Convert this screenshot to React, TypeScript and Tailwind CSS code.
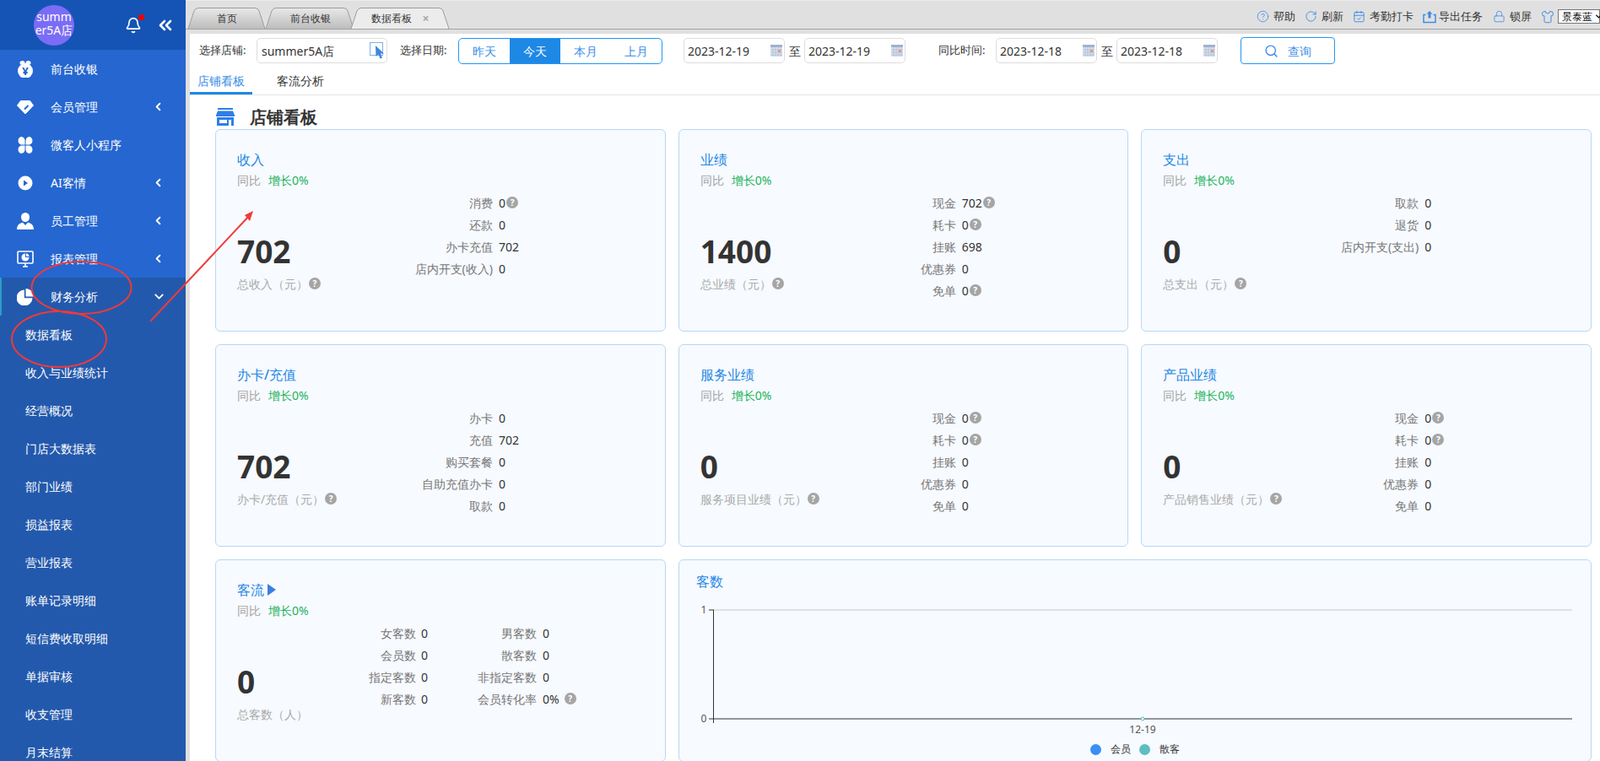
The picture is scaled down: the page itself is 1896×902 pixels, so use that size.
import { ChevronDown, ChevronLeft, ChevronsLeft, Bell, CircleHelp, RotateCw, CalendarCheck, Lock, Shirt, Search } from "lucide-react";
import type { ReactNode } from "react";

type Detail = { label: string; value: string; tip?: boolean };

const MoneyIcon = () => (
  <svg width="20" height="20" viewBox="0 0 20 20">
    <circle cx="10" cy="12" r="9" fill="#fff" />
    <ellipse cx="6.5" cy="2.5" rx="3" ry="2.5" fill="#fff" />
    <ellipse cx="13.5" cy="2.5" rx="3" ry="2.5" fill="#fff" />
    <text x="10" y="17" textAnchor="middle" fontSize="13" fontWeight="700" fill="#2566d0">¥</text>
  </svg>
);

const DiamondIcon = () => (
  <svg width="20" height="20" viewBox="0 0 20 20">
    <path d="M4.500 2.500H15.500L19.500 8L10 18L.5 8Z" fill="#fff" stroke="#fff" strokeLinejoin="round" />
    <path d="M9 12.500L13.500 8" stroke="#2566d0" strokeWidth="2" />
  </svg>
);

const CloverIcon = () => (
  <svg width="20" height="20" viewBox="0 0 20 20" fill="#fff">
    <path d="M5 0A5 5 0 0 1 9.500 5V9.500H5A5 5 0 0 1 5 0Z" />
    <path d="M15 0A5 5 0 0 0 10.500 5V9.500H15A5 5 0 0 0 15 0Z" />
    <path d="M5 20A5 5 0 0 0 9.500 15V10.500H5A5 5 0 0 0 5 20Z" />
    <path d="M15 20A5 5 0 0 1 10.500 15V10.500H15A5 5 0 0 1 15 20Z" />
  </svg>
);

const PlayIcon = () => (
  <svg width="20" height="20" viewBox="0 0 20 20">
    <circle cx="10" cy="10" r="8.500" fill="#fff" />
    <path d="M8 6.500L13 10L8 13.500Z" fill="#2566d0" />
  </svg>
);

const UserIcon = () => (
  <svg width="20" height="20" viewBox="0 0 20 20" fill="#fff">
    <ellipse cx="10" cy="5.500" rx="5" ry="5.500" />
    <path d="M0 20C0 15 3 12.500 7 11.800L10 15L13 11.800C17 12.500 20 15 20 20Z" />
  </svg>
);

const MonitorIcon = () => (
  <svg width="20" height="20" viewBox="0 0 20 20">
    <rect x="1" y="1" width="18" height="14" fill="none" stroke="#fff" strokeWidth="1.600" rx="1" />
    <path d="M7 19H13M10 15V19" stroke="#fff" strokeWidth="1.600" />
    <circle cx="10" cy="8" r="4.500" fill="#fff" />
    <path d="M10 8V3.500H14.500V8Z" fill="#2566d0" />
    <path d="M11 7V3.500A4 4 0 0 1 14.500 7Z" fill="#fff" />
  </svg>
);

const PieIcon = () => (
  <svg width="20" height="20" viewBox="0 0 20 20" fill="#fff">
    <path d="M8.800 1.500V11.200H18.500A9.500 9.500 0 1 1 8.800 1.500Z" />
    <path d="M10.500 0A9.500 9.500 0 0 1 20 9.500H10.500Z" />
  </svg>
);

const UploadIcon = () => (
  <svg width="16" height="16" viewBox="0 0 16 16" fill="none" stroke="#3f8ae6" strokeWidth="1.500">
    <path d="M3.500 5.500H1V14.500H15V5.500H12.500" />
    <path d="M8 1L11.500 4.500H9.500V9.500H6.500V4.500H4.500Z" fill="#3f8ae6" stroke="none" />
  </svg>
);

const StoreIcon = () => (
  <svg width="22" height="21" viewBox="0 0 22 21" fill="#2f7fe6">
    <rect x="2" y="0" width="18" height="2" />
    <path d="M2 3.500H20L22 8.500V10H0V8.500Z" />
    <path d="M1 11H21V21H18V14H4V18H13V14H15V21H1Z" />
  </svg>
);

const PickerIcon = () => (
  <svg width="18" height="20" viewBox="0 0 18 20">
    <rect x=".5" y=".5" width="15" height="15" fill="#fff" stroke="#7fb0e8" />
    <path d="M7 4L17 13.500H13L15 18.500L12.500 19.500L10.500 14.500L7.500 17Z" fill="#3f86dc" />
  </svg>
);

const CalendarIcon = () => (
  <svg width="14" height="14" viewBox="0 0 14 14">
    <rect width="14" height="14" fill="#dde4ef" />
    <rect width="14" height="3" fill="#9fb2cf" />
    <path d="M0 6H14M0 9H14M0 12H14M3 3V14M6 3V14M9 3V14M12 3V14" stroke="#a9bbd6" strokeWidth=".8" />
    <rect x="9" y="6" width="3" height="3" fill="#e8967c" />
  </svg>
);

const Tip = ({ className = "" }: { className?: string }) => (
  <span className={`inline-flex h-[14px] w-[14px] shrink-0 items-center justify-center rounded-full bg-[#a5a5a5] text-[10px] font-bold leading-none text-white ${className}`}>?</span>
);

const menu = [
  { name: "前台收银", icon: <MoneyIcon /> },
  { name: "会员管理", icon: <DiamondIcon />, arrow: true },
  { name: "微客人小程序", icon: <CloverIcon /> },
  { name: "AI客情", icon: <PlayIcon />, arrow: true },
  { name: "员工管理", icon: <UserIcon />, arrow: true },
  { name: "报表管理", icon: <MonitorIcon />, arrow: true },
];

const subMenu = ["数据看板", "收入与业绩统计", "经营概况", "门店大数据表", "部门业绩", "损益报表", "营业报表", "账单记录明细", "短信费收取明细", "单据审核", "收支管理", "月末结算"];

const Sidebar = () => (
  <aside className="flex h-full w-[220px] shrink-0 flex-col overflow-hidden bg-[#2359ac] text-sm text-white">
    <div className="flex h-[59px] shrink-0 items-center bg-[#1554b4]">
      <div className="ml-[40px] h-[48px] w-[48px] overflow-hidden rounded-full bg-[#7b6cf6] text-center text-[14px] leading-[16px] [word-break:break-all]">
        <div className="pt-[6px]">summer5A店</div>
      </div>
      <div className="relative ml-[60px]">
        <Bell size={20} strokeWidth={2} />
        <span className="absolute right-[-3px] top-[-3px] h-[7px] w-[7px] rounded-full bg-[#f00000]" />
      </div>
      <ChevronsLeft size={24} strokeWidth={2.6} className="ml-[16px]" />
    </div>
    <div className="bg-[#2566d0]">
      {menu.map((m) => (
        <div key={m.name} className="flex h-[45px] items-center pl-[20px]">
          {m.icon}
          <span className="ml-[20px]">{m.name}</span>
          {m.arrow && <ChevronLeft size={15} strokeWidth={3} className="absolute left-[180px]" />}
        </div>
      ))}
    </div>
    <div className="relative flex h-[45px] shrink-0 items-center border-l-2 border-[#2a9dc4] pl-[18px]">
      <PieIcon />
      <span className="ml-[20px]">财务分析</span>
      <ChevronDown size={17} strokeWidth={2.6} className="absolute left-[178px]" />
    </div>
    {subMenu.map((s) => (
      <div key={s} className="flex h-[45px] shrink-0 items-center pl-[30px]">{s}</div>
    ))}
  </aside>
);

const Tab = ({ label, width, active, className = "" }: { label: string; width: number; active?: boolean; className?: string }) => (
  <div style={{ width }} className={`relative flex h-[25px] items-center text-[12px] text-[#333] ${active ? "z-10" : ""} ${className}`}>
    <svg width={width} height="25" viewBox={`0 0 ${width} 25`} className="absolute left-0 top-0">
      <defs>
        <linearGradient id={`tab-${width}`} x1="0" y1="0" x2="0" y2="1">
          <stop offset="0" stopColor={active ? "#ececec" : "#e8e8e8"} />
          <stop offset="1" stopColor={active ? "#ececec" : "#bdbdbd"} />
        </linearGradient>
      </defs>
      <path d={`M1 25 L8 4 Q9.500 .5 13 .5 H${width - 14} Q${width - 10} .5 ${width - 9} 4 L${width - 2} 25`} fill={`url(#tab-${width})`} stroke="#9c9c9c" />
    </svg>
    <span className="relative ml-auto mr-auto flex items-center">
      {label}
      {active && <span className="ml-[12px] text-[14px] font-bold text-[#aaa]">×</span>}
    </span>
  </div>
);

const ToolLink = ({ icon, label, className }: { icon: ReactNode; label: string; className: string }) => (
  <div className={`flex items-center text-[13px] text-[#333] ${className}`}>
    {icon}
    <span className="ml-[5px]">{label}</span>
  </div>
);

const TopBar = () => (
  <div className="h-[40px] shrink-0 border-t border-[#ececf0] bg-[#e0e0e0]">
    <div className="flex h-[34px] items-end border-b border-[#a2a2a2] pl-[2px]">
      <Tab label="首页" width={94} />
      <Tab label="前台收银" width={107} className="-ml-[2px]" />
      <Tab label="数据看板" width={119} active className="-ml-[6px]" />
      <div className="ml-auto flex h-[33px] items-center overflow-hidden pt-[4px]">
        <ToolLink icon={<CircleHelp size={15} strokeWidth={1.300} color="#3f8ae6" />} label="帮助" className="mr-[11px]" />
        <ToolLink icon={<RotateCw size={15} strokeWidth={1.500} color="#3f8ae6" />} label="刷新" className="mr-[11px]" />
        <ToolLink icon={<CalendarCheck size={15} strokeWidth={1.500} color="#3f8ae6" />} label="考勤打卡" className="mr-[11px]" />
        <div className="mr-[12px] flex items-center text-[13px] text-[#333]"><UploadIcon /><span className="ml-[3px]">导出任务</span></div>
        <ToolLink icon={<Lock size={15} strokeWidth={1.300} color="#3f8ae6" />} label="锁屏" className="mr-[11px]" />
        <Shirt size={16} strokeWidth={1.500} color="#3f8ae6" />
        <div className="ml-[4px] flex h-[17px] w-[50px] shrink-0 items-center whitespace-nowrap border border-[#777] bg-white pl-[4px] text-[12px] text-black">
          景泰蓝<ChevronDown size={11} strokeWidth={3} className="ml-[2px] shrink-0" />
        </div>
      </div>
    </div>
  </div>
);

const DateInput = ({ value, className = "" }: { value: string; className?: string }) => (
  <div className={`flex h-[30px] w-[120px] shrink-0 items-center justify-between rounded-[5px] border border-[#ddd] pl-[4px] pr-[2px] text-[14px] text-[#333] ${className}`}>
    {value}
    <CalendarIcon />
  </div>
);

const Label = ({ text, className }: { text: string; className: string }) => (
  <span className={`w-[60px] shrink-0 whitespace-nowrap text-[13px] text-[#333] ${className}`}>{text}</span>
);

const Toolbar = () => (
  <div className="flex h-[40px] shrink-0 items-center text-[14px]">
    <Label text="选择店铺:" className="ml-[11px]" />
    <div className="ml-[8px] flex h-[30px] w-[155px] items-center justify-between rounded-[5px] border border-[#ddd] pl-[5px] pr-[2px] text-[#333]">
      summer5A店
      <PickerIcon />
    </div>
    <Label text="选择日期:" className="ml-[15px]" />
    <div className="ml-[9px] flex h-[31px] w-[242px] overflow-hidden rounded-[5px] border border-[#2196f3] text-[#3a8ee6]">
      <span className="flex w-[60px] items-center justify-center">昨天</span>
      <span className="flex w-[60px] items-center justify-center bg-[#1e88e5] text-white">今天</span>
      <span className="flex w-[60px] items-center justify-center">本月</span>
      <span className="flex w-[60px] items-center justify-center">上月</span>
    </div>
    <DateInput value="2023-12-19" className="ml-[25px]" />
    <span className="ml-[5px] text-[#333]">至</span>
    <DateInput value="2023-12-19" className="ml-[4px]" />
    <Label text="同比时间:" className="ml-[39px]" />
    <DateInput value="2023-12-18" className="ml-[8px]" />
    <span className="ml-[5px] text-[#333]">至</span>
    <DateInput value="2023-12-18" className="ml-[4px]" />
    <button className="ml-[27px] flex h-[32px] w-[112px] items-center justify-center rounded-[4px] border border-[#2196f3] text-[#3a8ee6]">
      <Search size={17} strokeWidth={2} />
      <span className="ml-[11px]">查询</span>
    </button>
  </div>
);

const StatHead = ({ title }: { title: ReactNode }) => (
  <>
    <div className="flex h-[24px] items-center text-[16px] font-medium leading-[24px] text-[#1e88e5]">{title}</div>
    <div className="mt-[3px] flex h-[20px] items-center text-[14px] leading-[20px]">
      <span className="text-[#a3a3a3]">同比</span>
      <span className="ml-[9px] text-[#19b35b]">增长0%</span>
    </div>
  </>
);

const StatTotal = ({ value, unit, tip }: { value: string; unit: string; tip?: boolean }) => (
  <div className="pt-[49px]">
    <div className="h-[44px] text-[37px] font-bold leading-[44px] text-[#333]">{value}</div>
    <div className="mt-[6px] flex h-[20px] items-center whitespace-nowrap text-[14px] text-[#aaa]">
      {unit}
      {tip && <Tip className="ml-[1px]" />}
    </div>
  </div>
);

const StatCard = ({ title, total, unit, details }: { title: string; total: string; unit: string; details: Detail[] }) => (
  <div className="h-[240px] rounded-[6px] border border-[#b8d8f5] bg-[#f7faff] pl-[25px] pt-[23px]">
    <StatHead title={title} />
    <div className="mt-[3px] flex">
      <div className="w-[203px] shrink-0">
        <StatTotal value={total} unit={unit} tip />
      </div>
      <div className="text-[14px]">
        {details.map((d) => (
          <div key={d.label} className="flex h-[26px] items-center">
            <span className="w-[100px] shrink-0 whitespace-nowrap text-right text-[#777]" dir="rtl"><bdi>{d.label}</bdi></span>
            <span className="ml-[7px] text-[#333]">{d.value}</span>
            {d.tip && <Tip className="ml-[1px]" />}
          </div>
        ))}
      </div>
    </div>
  </div>
);

const flowRows = [
  ["女客数", "0", "男客数", "0"],
  ["会员数", "0", "散客数", "0"],
  ["指定客数", "0", "非指定客数", "0"],
  ["新客数", "0", "会员转化率", "0%"],
];

const FlowCard = () => (
  <div className="h-[240px] rounded-[6px] border border-[#b8d8f5] bg-[#f7faff] pl-[25px] pt-[23px]">
    <StatHead
      title={
        <>
          客流
          <svg width="10" height="14" viewBox="0 0 10 14" className="ml-[4px]"><path d="M0 0L10 7L0 14Z" fill="#3a7fe0" /></svg>
        </>
      }
    />
    <div className="mt-[3px] flex">
      <div className="w-[120px] shrink-0">
        <StatTotal value="0" unit="总客数（人）" />
      </div>
      <div className="text-[14px]">
        {flowRows.map((r) => (
          <div key={r[0]} className="flex h-[26px] items-center">
            <span className="w-[92px] shrink-0 text-right text-[#777]">{r[0]}</span>
            <span className="ml-[6px] w-[52px] shrink-0 text-[#333]">{r[1]}</span>
            <span className="w-[85px] shrink-0 text-right text-[#777]">{r[2]}</span>
            <span className="ml-[7px] text-[#333]">{r[3]}</span>
            {r[3] === "0%" && <Tip className="ml-[6px]" />}
          </div>
        ))}
      </div>
    </div>
  </div>
);

const ChartCard = () => (
  <div className="col-span-2 h-[240px] rounded-[6px] border border-[#b8d8f5] bg-[#f7faff]">
    <div className="pl-[20px] pt-[13px] text-[16px] font-medium leading-[24px] text-[#1e88e5]">客数</div>
    <svg width="1060" height="170" viewBox="0 0 1060 170" className="ml-[15px] mt-[9px] block">
      <path d="M26 13H1043" stroke="#c8c8c8" />
      <path d="M20 13H26M25.500 13V147M20 142H1043" stroke="#333" fill="none" />
      <text x="14" y="17" textAnchor="middle" fontSize="12" fill="#555">1</text>
      <text x="14" y="146" textAnchor="middle" fontSize="12" fill="#555">0</text>
      <circle cx="534" cy="142" r="2" fill="#f7faff" stroke="#5bc0c8" />
      <text x="534" y="159" textAnchor="middle" fontSize="12" fill="#555">12-19</text>
    </svg>
    <div className="flex items-center justify-center text-[12px] leading-4 text-[#333]">
      <span className="h-[13px] w-[13px] rounded-full bg-[#3a8ff5]" />
      <span className="ml-[11px]">会员</span>
      <span className="ml-[10px] h-[13px] w-[13px] rounded-full bg-[#5cbfbf]" />
      <span className="ml-[11px]">散客</span>
    </div>
  </div>
);

const q = true;

const cards = [
  {
    title: "收入",
    total: "702",
    unit: "总收入（元）",
    details: [
      { label: "消费", value: "0", tip: q },
      { label: "还款", value: "0" },
      { label: "办卡充值", value: "702" },
      { label: "店内开支(收入)", value: "0" },
    ],
  },
  {
    title: "业绩",
    total: "1400",
    unit: "总业绩（元）",
    details: [
      { label: "现金", value: "702", tip: q },
      { label: "耗卡", value: "0", tip: q },
      { label: "挂账", value: "698" },
      { label: "优惠券", value: "0" },
      { label: "免单", value: "0", tip: q },
    ],
  },
  {
    title: "支出",
    total: "0",
    unit: "总支出（元）",
    details: [
      { label: "取款", value: "0" },
      { label: "退货", value: "0" },
      { label: "店内开支(支出)", value: "0" },
    ],
  },
  {
    title: "办卡/充值",
    total: "702",
    unit: "办卡/充值（元）",
    details: [
      { label: "办卡", value: "0" },
      { label: "充值", value: "702" },
      { label: "购买套餐", value: "0" },
      { label: "自助充值办卡", value: "0" },
      { label: "取款", value: "0" },
    ],
  },
  {
    title: "服务业绩",
    total: "0",
    unit: "服务项目业绩（元）",
    details: [
      { label: "现金", value: "0", tip: q },
      { label: "耗卡", value: "0", tip: q },
      { label: "挂账", value: "0" },
      { label: "优惠券", value: "0" },
      { label: "免单", value: "0" },
    ],
  },
  {
    title: "产品业绩",
    total: "0",
    unit: "产品销售业绩（元）",
    details: [
      { label: "现金", value: "0", tip: q },
      { label: "耗卡", value: "0", tip: q },
      { label: "挂账", value: "0" },
      { label: "优惠券", value: "0" },
      { label: "免单", value: "0" },
    ],
  },
];

const Annotations = () => (
  <svg width="1896" height="902" viewBox="0 0 1896 902" className="pointer-events-none absolute left-0 top-0 z-20">
    <g fill="none" stroke="#f03a3a" strokeWidth="2">
      <ellipse cx="96.500" cy="341" rx="59" ry="31" />
      <ellipse cx="70" cy="402" rx="56" ry="33" />
      <path d="M178 381L296 255" />
    </g>
    <path d="M300 250L290 255L296 262Z" fill="#f03a3a" />
  </svg>
);

export default function App() {
  return (
    <div className="relative flex h-[902px] w-[1896px] overflow-hidden bg-[#e0e0e0] font-['Noto_Sans','Noto_Sans_CJK_SC',sans-serif]">
      <Sidebar />
      <div className="flex h-full min-w-0 flex-1 flex-col">
        <TopBar />
        <main className="ml-[5px] flex min-h-0 flex-1 flex-col overflow-hidden bg-white">
          <Toolbar />
          <div className="flex h-[33px] shrink-0 border-b border-[#e5e5e5] text-[14px]">
            <div className="flex w-[74px] items-center justify-center border-b-[3px] border-[#1e88e5] pt-[1px] text-[#3a8ee6]">店铺看板</div>
            <div className="ml-[29px] flex items-center pb-[2px] text-[#333]">客流分析</div>
          </div>
          <div className="pl-[30px] pr-[10px]">
            <div className="mt-[11px] flex h-[29px] items-center pl-[1px] text-[20px] font-bold leading-[29px] text-[#333]">
              <StoreIcon />
              <span className="ml-[18px]">店铺看板</span>
            </div>
            <div className="grid grid-cols-3 gap-[15px]">
              {cards.map((c) => (
                <StatCard key={c.title} {...c} />
              ))}
              <FlowCard />
              <ChartCard />
            </div>
          </div>
        </main>
      </div>
      <Annotations />
    </div>
  );
}
